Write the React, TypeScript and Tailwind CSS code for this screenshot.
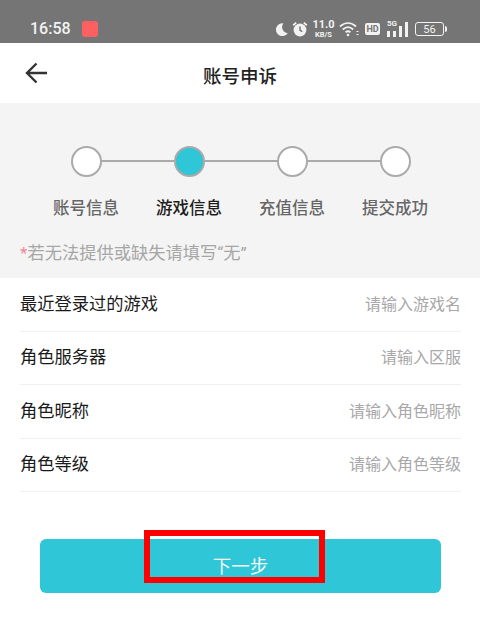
const font = "font-['Roboto','Noto_Sans_CJK_SC',sans-serif]";

const steps = [
  { label: "账号信息", active: false },
  { label: "游戏信息", active: true },
  { label: "充值信息", active: false },
  { label: "提交成功", active: false },
];

const fields = [
  { label: "最近登录过的游戏", hint: "请输入游戏名" },
  { label: "角色服务器", hint: "请输入区服" },
  { label: "角色昵称", hint: "请输入角色昵称" },
  { label: "角色等级", hint: "请输入角色等级" },
];

const StatusBar = () => (
  <div className="h-[43px] bg-[#757575] flex items-center pl-[30px] pr-[33px] pt-[15px] text-[#f2f2f2]">
    <span className="text-[16px] font-medium leading-none">16:58</span>
    <div className="w-[16px] h-[16px] rounded-[3px] bg-[#fd6060] ml-[11px]" />
    <div className="ml-auto flex items-center">
      <svg viewBox="0 0 16 16" className="w-[15px] h-[15px] fill-[#f2f2f2]">
        <path d="M10 1.5a6.8 6.8 0 1 0 4.6 10.4A6.5 6.5 0 0 1 10 1.5z" />
      </svg>
      <svg viewBox="0 0 16 16" className="w-[16px] h-[16px] ml-[3px]">
        <path d="M1.2 4.2 4.2 1.6M14.8 4.2 11.8 1.6" className="fill-none stroke-[#f2f2f2] stroke-[1.8]" />
        <circle cx="8" cy="9" r="6.4" className="fill-[#f2f2f2]" />
        <path d="M8 5.6v3.6l2.2 1.4" className="fill-none stroke-[#757575] stroke-[1.5]" />
      </svg>
      <div className="ml-[5px] w-[21px] flex flex-col items-center">
        <span className="block text-[11px] font-bold leading-[10px]">11.0</span>
        <span className="block text-[7.5px] font-bold leading-[9px]">KB/S</span>
      </div>
      <svg viewBox="0 0 20 16" className="w-[20px] h-[16px] ml-[5px] fill-none stroke-[#f2f2f2] stroke-[1.8]">
        <path d="M1 5.5c5-4.6 11-4.6 16 0M3.8 8.5c3.3-3 7.1-3 10.4 0M6.6 11.3c1.6-1.4 3.2-1.4 4.8 0" />
        <circle cx="9" cy="14" r="1.3" className="fill-[#f2f2f2] stroke-none" />
        <path d="M17.5 10.5h2M17.5 13.5h2" className="stroke-[1.2]" />
      </svg>
      <div className="ml-[6px] w-[15px] h-[12px] rounded-[2px] bg-[#f2f2f2] flex items-center justify-center text-[9px] font-bold leading-none text-[#757575]">
        HD
      </div>
      <div className="ml-[7px] relative w-[21px] h-[16px]">
        <span className="absolute left-0 -top-[1px] text-[8px] font-bold leading-none">5G</span>
        <div className="absolute left-0 bottom-0 w-[3px] h-[6px] bg-[#f2f2f2]" />
        <div className="absolute left-[6px] bottom-0 w-[3px] h-[6px] bg-[#f2f2f2]" />
        <div className="absolute left-[12px] bottom-0 w-[3px] h-[11px] bg-[#f2f2f2]" />
        <div className="absolute left-[18px] bottom-0 w-[3px] h-[15px] bg-[#f2f2f2]" />
      </div>
      <div className="ml-[7px] w-[29px] h-[14px] rounded-[3px] border border-[#f2f2f2] flex items-center justify-center text-[11px] leading-none">
        56
      </div>
      <div className="w-[2px] h-[6px] ml-px bg-[#f2f2f2] rounded-r-sm" />
    </div>
  </div>
);

const NavBar = () => (
  <div className="h-[60px] bg-white relative flex items-center">
    <svg viewBox="0 0 24 24" className="absolute left-[24px] top-[18px] w-[24px] h-[24px] fill-none stroke-[#333] stroke-[2.4]">
      <path d="M23 12H3M12.5 2.5 3 12l9.5 9.5" />
    </svg>
    <div className="w-full text-center text-[18.5px] font-medium text-[#222] pt-[9px]">账号申诉</div>
  </div>
);

const Stepper = () => (
  <div className="h-[175px] bg-[#f4f4f4] flex flex-col">
    <div className="relative grid grid-cols-[repeat(4,103px)] justify-center pt-[43px] pl-[1px]">
      <div className="absolute left-[89px] right-[86px] top-[57px] h-[2px] bg-[#aaaaaa]" />
      {steps.map((s) => (
        <div key={s.label} className="relative flex flex-col items-center">
          <div
            className={`w-[31px] h-[31px] rounded-full border-2 border-[#aaaaaa] ${
              s.active ? "bg-[#2fc6d8]" : "bg-white"
            }`}
          />
          <span
            className={`mt-[20px] text-[16.5px] leading-[24px] font-medium whitespace-nowrap ${
              s.active ? "text-[#1c1c1c]" : "text-[#666666]"
            }`}
          >
            {s.label}
          </span>
        </div>
      ))}
    </div>
    <div className="mt-[20px] pl-[20px] text-[17.25px] leading-[24px] text-[#a6a6a6]">
      <span className="text-[#f08a96]">*</span>若无法提供或缺失请填写“无”
    </div>
  </div>
);

export default function App() {
  return (
    <div className={`w-[480px] h-[618px] overflow-hidden bg-white ${font}`}>
      <StatusBar />
      <NavBar />
      <Stepper />
      <div className="ml-[20px] mr-[19px]">
        {fields.map((f) => (
          <div
            key={f.label}
            className="h-[53.5px] pt-[1px] flex items-center justify-between border-b border-[#f0f0f0]"
          >
            <span className="text-[17.25px] text-[#1a1a1a]">{f.label}</span>
            <span className="text-[16px] text-[#a8a8a8]">{f.hint}</span>
          </div>
        ))}
      </div>
      <div className="relative ml-[40px] mr-[39px] mt-[47px] h-[54px] rounded-[6px] bg-[#2fc6d8] flex items-center justify-center">
        <span className="text-[18.5px] text-[#f4fdfe] pt-[3px]">下一步</span>
        <div className="absolute left-[104px] -top-[9px] w-[181px] h-[53px] border-[6px] border-[#ff0000]" />
      </div>
    </div>
  );
}
